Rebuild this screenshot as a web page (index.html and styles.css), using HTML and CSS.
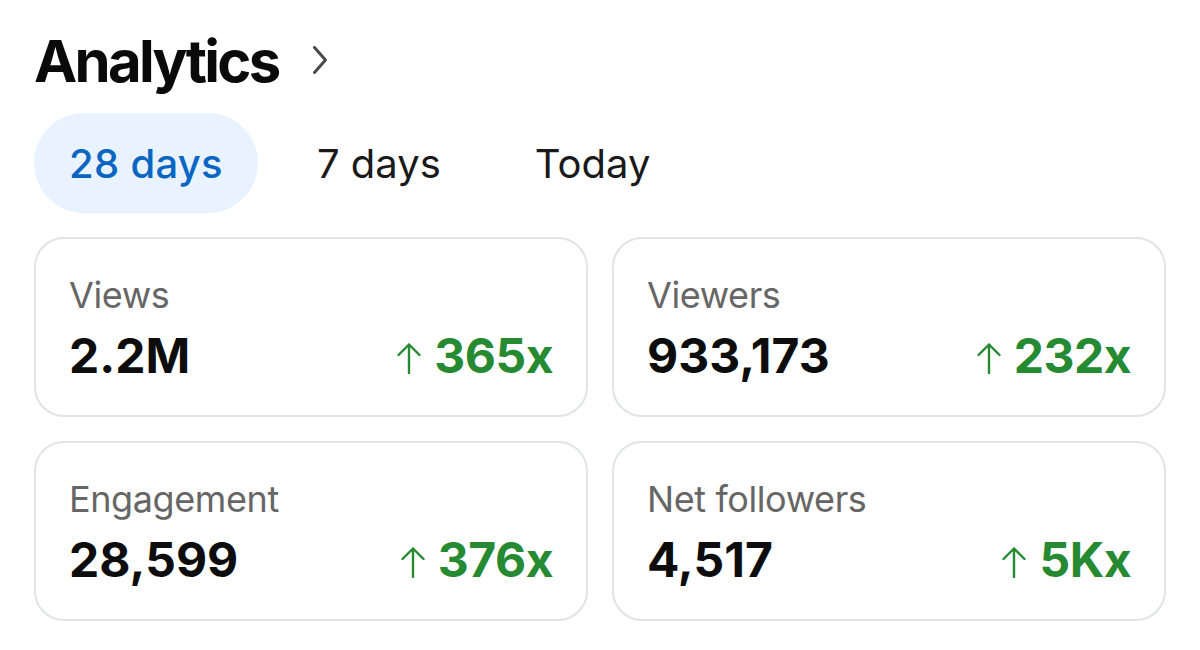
FILE: index.html
```html
<!DOCTYPE html>
<html>
<head>
<meta charset="utf-8">
<link rel="stylesheet" href="styles.css">
</head>
<body>
<div class="page">
  <div class="header">
    <h1 class="title">Analytics</h1>
    <svg class="chevron" width="16" height="30" viewBox="0 0 16 30"><path d="M2.5 2.5 L13.5 15 L2.5 27.5" fill="none" stroke="#4a4a4a" stroke-width="3" stroke-linecap="round" stroke-linejoin="round"/></svg>
  </div>
  <div class="tabs">
    <div class="tab active">28 days</div>
    <div class="tab">7 days</div>
    <div class="tab">Today</div>
  </div>
  <div class="grid">
    <div class="card">
      <div class="label">Views</div>
      <div class="row"><span class="value">2.2M</span><span class="delta"><svg class="arrow" width="26" height="32" viewBox="0 0 26 32"><path d="M13 2.5 V31 M2.5 13 L13 2.5 L23.5 13" fill="none" stroke="#268a33" stroke-width="2.4" stroke-linecap="round" stroke-linejoin="round"/></svg>365x</span></div>
    </div>
    <div class="card">
      <div class="label">Viewers</div>
      <div class="row"><span class="value">933,173</span><span class="delta"><svg class="arrow" width="26" height="32" viewBox="0 0 26 32"><path d="M13 2.5 V31 M2.5 13 L13 2.5 L23.5 13" fill="none" stroke="#268a33" stroke-width="2.4" stroke-linecap="round" stroke-linejoin="round"/></svg>232x</span></div>
    </div>
    <div class="card">
      <div class="label">Engagement</div>
      <div class="row"><span class="value">28,599</span><span class="delta"><svg class="arrow" width="26" height="32" viewBox="0 0 26 32"><path d="M13 2.5 V31 M2.5 13 L13 2.5 L23.5 13" fill="none" stroke="#268a33" stroke-width="2.4" stroke-linecap="round" stroke-linejoin="round"/></svg>376x</span></div>
    </div>
    <div class="card">
      <div class="label">Net followers</div>
      <div class="row"><span class="value">4,517</span><span class="delta"><svg class="arrow" width="26" height="32" viewBox="0 0 26 32"><path d="M13 2.5 V31 M2.5 13 L13 2.5 L23.5 13" fill="none" stroke="#268a33" stroke-width="2.4" stroke-linecap="round" stroke-linejoin="round"/></svg>5Kx</span></div>
    </div>
  </div>
</div>
</body>
</html>
```
FILE: styles.css
```css
html, body {
  margin: 0;
  padding: 0;
  background: #ffffff;
}
body {
  font-family: Inter, Roboto, "Liberation Sans", sans-serif;
  color: #000;
}
.page {
  padding: 26px 34px 0 34px;
}
.header {
  display: flex;
  align-items: center;
  gap: 33px;
  height: 70px;
}
.title {
  margin: 0;
  font-size: 58px;
  font-weight: 700;
  letter-spacing: -2.7px;
  line-height: 70px;
  color: #0a0a0a;
}
.chevron {
  margin-top: -2px;
}
.tabs {
  display: flex;
  margin-top: 17px;
  height: 100px;
  align-items: center;
}
.tab {
  height: 100px;
  display: flex;
  align-items: center;
  padding: 0 35px;
  font-size: 40px;
  color: #1a1a1a;
  border-radius: 50px;
  margin-right: 24px;
}
.tab.active {
  background: #e8f3ff;
  color: #0a66c2;
  font-weight: 500;
  letter-spacing: 0.3px;
}
.grid {
  margin-top: 24px;
  display: grid;
  grid-template-columns: 554px 554px;
  column-gap: 24px;
  row-gap: 24px;
}
.card {
  height: 180px;
  box-sizing: border-box;
  border: 2px solid #e1e3e6;
  border-radius: 30px;
  padding: 34px 33px 0 33px;
}
.label {
  font-size: 36px;
  letter-spacing: -0.4px;
  color: #666666;
  line-height: 44px;
}
.row {
  display: flex;
  justify-content: space-between;
  align-items: baseline;
  margin-top: 11px;
}
.value {
  font-size: 48px;
  font-weight: 700;
  line-height: 56px;
  color: #0d0d0d;
}
.delta {
  font-size: 48px;
  font-weight: 700;
  color: #268a33;
  line-height: 56px;
  letter-spacing: -0.5px;
}
.arrow {
  display: inline-block;
  vertical-align: -1px;
  margin-right: 12px;
}
```
